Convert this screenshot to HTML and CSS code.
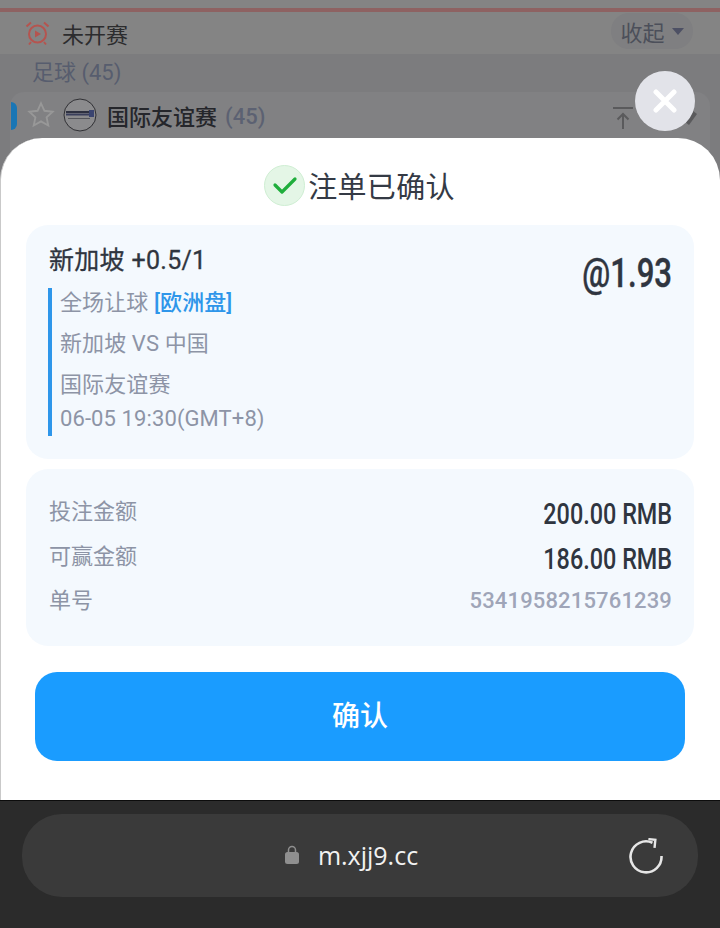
FILE: index.html
```html
<!DOCTYPE html>
<html lang="zh-CN">
<head>
  <meta charset="UTF-8">
  <title>注单已确认</title>
  <link rel="stylesheet" href="styles.css">
</head>
<body>

  <!-- PAGE UNDER THE DIALOG -->
  <div id="page">
    <div class="top-strip"></div>
    <div class="status-row">
      <div class="status-left">
        <svg class="clock-icon" width="26" height="26" viewBox="0 0 26 26" fill="none" stroke="#b5544f" stroke-width="2">
          <circle cx="12.5" cy="14" r="8.5"/>
          <path d="M1.5 6.500 6 2.500M23.500 6.500 19 2.500M6 22l-2 2.500M19 22l2 2.500"/>
          <path d="M10 10.500v7l6-3.500z" fill="#b5544f" stroke="none"/>
        </svg>
        <span>未开赛</span>
      </div>
      <div class="collapse-pill">收起<i class="caret"></i></div>
    </div>
    <div class="sport-row">足球 (45)</div>
    <div class="league-card">
      <i class="league-mark"></i>
      <svg class="star-icon" width="28" height="28" viewBox="0 0 30 30" fill="none" stroke="#989898" stroke-width="2">
        <path d="M15 2.500l3.700 8 8.800 1-6.500 6 1.800 8.700-7.800-4.400-7.800 4.400 1.800-8.700-6.500-6 8.800-1z"/>
      </svg>
      <svg class="league-logo" width="34" height="34" viewBox="0 0 34 34">
        <circle cx="17" cy="17" r="16" fill="#8b8b8d" stroke="#303034" stroke-width="1"/>
        <rect x="3" y="13" width="28" height="2" fill="#2d3040"/>
        <rect x="3" y="15.500" width="24" height="2" fill="#3a3f5c"/>
        <rect x="26" y="12" width="5" height="7" fill="#3a4470"/>
        <rect x="5" y="20" width="22" height="1" fill="#55565c"/>
      </svg>
      <span class="league-name">国际友谊赛</span>
      <span class="league-count">(45)</span>
      <svg class="pin-icon" width="20" height="22" viewBox="0 0 20 22" fill="none" stroke="#5a5a5c" stroke-width="2">
        <path d="M0 1h20M10 22V7M4.500 12.500 10 7l5.500 5.500"/>
      </svg>
      <svg class="edit-icon" width="14" height="14" viewBox="0 0 14 14" fill="#5a5a5c">
        <path d="M10 0l4 3-8 11-4-3z"/>
      </svg>
    </div>
  </div>

  <button class="close-btn" type="button">
    <svg width="24" height="24" viewBox="0 0 24 24" stroke="#fff" stroke-width="5" stroke-linecap="round">
      <path d="M3 3l18 18M21 3L3 21"/>
    </svg>
  </button>

  <!-- CONFIRM DIALOG -->
  <div id="dialog">
    <div class="dialog-title">
      <span class="check-badge">
        <svg width="26" height="20" viewBox="0 0 26 20" fill="none" stroke="#1fae3c" stroke-width="3.200" stroke-linecap="round" stroke-linejoin="round">
          <path d="M3 10l7 7L23 4"/>
        </svg>
      </span>
      <span>注单已确认</span>
    </div>

    <div class="card bet-card">
      <div class="bet-head">
        <div class="bet-pick">新加坡 +0.5/1</div>
        <div class="bet-odds"><span class="narrow">@1.93</span></div>
      </div>
      <div class="bet-info">
        <div class="info-line">全场让球 <strong>[欧洲盘]</strong></div>
        <div class="info-line">新加坡 VS 中国</div>
        <div class="info-line">国际友谊赛</div>
        <div class="info-line info-time">06-05 19:30(GMT+8)</div>
      </div>
    </div>

    <div class="card amount-card">
      <div class="amount-row"><span>投注金额</span><b class="narrow">200.00 RMB</b></div>
      <div class="amount-row"><span>可赢金额</span><b class="narrow">186.00 RMB</b></div>
      <div class="amount-row"><span>单号</span><em>5341958215761239</em></div>
    </div>

    <button class="confirm-btn" type="button">确认</button>
  </div>

  <!-- BROWSER BAR -->
  <div id="browser-bar">
    <div class="url-pill">
      <div class="url-text">
        <svg width="16" height="20" viewBox="0 0 16 20">
          <path d="M4.500 8V5a3.500 3.500 0 0 1 7 0v3" fill="none" stroke="#8f8f8f" stroke-width="1.500"/>
          <rect x="1" y="7" width="14" height="12" rx="2.500" fill="#8f8f8f"/>
        </svg>
        <span>m.xjj9.cc</span>
      </div>
      <svg class="reload-icon" width="36" height="36" viewBox="0 0 36 36" fill="none" stroke="#e6e6e6" stroke-width="2.600">
        <path d="M24.500 4.800A15.500 15.500 0 1 0 33.500 18"/>
        <path d="M20 1.500h7v8" stroke-width="2.400" transform="rotate(6 24 5)"/>
      </svg>
    </div>
  </div>

</body>
</html>
```

FILE: styles.css
```css
* {
  box-sizing: border-box;
}

body {
  position: relative;
  width: 720px;
  height: 928px;
  margin: 0;
  overflow: hidden;
  display: flex;
  flex-direction: column;
  background: #7b7b7b;
  font-family: Roboto, "Noto Sans CJK SC", sans-serif;
  color: #2f3540;
}

#page {
  height: 800px;
  background: #7c7c7e;
}

.top-strip {
  height: 12px;
  background: #848484;
  border-bottom: 4px solid #8e6262;
}

.status-row {
  height: 42px;
  padding: 0 27px 0 25px;
  background: #848484;
  display: flex;
  align-items: center;
  justify-content: space-between;
  font-size: 22px;
  color: #2c2c2e;
}

.status-left {
  display: flex;
  align-items: center;
  gap: 11px;
}

.collapse-pill {
  width: 82px;
  height: 36px;
  margin-top: -4px;
  border-radius: 18px;
  background: #7f7f81;
  display: flex;
  align-items: center;
  justify-content: center;
  gap: 7px;
  color: #4c4f5a;
}

.caret {
  width: 0;
  height: 0;
  border-left: 6px solid transparent;
  border-right: 6px solid transparent;
  border-top: 7px solid #4d5064;
}

.sport-row {
  height: 38px;
  padding: 0 0 7px 32px;
  display: flex;
  align-items: center;
  font-size: 22px;
  color: #575d6e;
}

.league-card {
  position: relative;
  height: 60px;
  margin: 0 10px;
  padding: 0 0 14px 17px;
  background: #818183;
  border-radius: 14px 14px 0 0;
  display: flex;
  align-items: center;
  font-size: 22px;
  font-weight: 500;
  color: #25262b;
}

.league-mark {
  position: absolute;
  left: 1px;
  top: 10px;
  width: 6px;
  height: 28px;
  background: #1a76b5;
  border-radius: 0 6px 6px 0;
}

.league-logo {
  margin: 0 10px 0 8px;
}

.league-count {
  margin: 3px 0 0 8px;
  color: #5c6172;
}

.pin-icon {
  margin: 6px 0 0 auto;
}

.edit-icon {
  margin: 6px 13px 0 50px;
}

.close-btn {
  position: absolute;
  left: 635px;
  top: 71px;
  width: 60px;
  height: 60px;
  padding: 0;
  border: none;
  border-radius: 50%;
  background: #e2e3e9;
  display: flex;
  align-items: center;
  justify-content: center;
}

#dialog {
  position: absolute;
  left: 0;
  top: 138px;
  width: 720px;
  height: 662px;
  padding: 26px 26px 0 25px;
  background: #fff;
  border-radius: 42px 42px 0 0;
  border-left: 1px solid #c9c9c9;
}

.dialog-title {
  height: 42px;
  padding-right: 1px;
  display: flex;
  align-items: center;
  justify-content: center;
  gap: 3px;
  font-size: 29px;
  letter-spacing: 0.3px;
  color: #343a45;
}

.check-badge {
  width: 41px;
  height: 41px;
  border-radius: 50%;
  background: #e4f6e6;
  border: 1px solid #cfeed3;
  display: flex;
  align-items: center;
  justify-content: center;
}

.card {
  background: #f4f9fe;
  border-radius: 22px;
}

.bet-card {
  height: 234px;
  margin-top: 19px;
  padding: 19px 22px 0 23px;
}

.bet-head {
  display: flex;
  justify-content: space-between;
}

.bet-pick {
  font-size: 25px;
  line-height: 34px;
  letter-spacing: 0.3px;
  -webkit-text-stroke: 0.3px #2f3540;
}

.narrow {
  display: inline-block;
  transform: scaleX(0.78);
  transform-origin: right center;
}

.bet-odds {
  font-size: 41px;
  font-weight: 500;
  line-height: 58px;
}

.bet-odds .narrow {
  transform: scaleX(0.76);
  -webkit-text-stroke: 0.4px #2f3540;
}

.bet-info {
  width: 300px;
  height: 148px;
  margin: -14px 0 0 -1px;
  padding-left: 8px;
  border-left: 4px solid #2e96ea;
}

.info-line {
  height: 41px;
  font-size: 22px;
  line-height: 30px;
  letter-spacing: 0.1px;
  color: #8d94a6;
}

.info-line strong {
  font-weight: 500;
  color: #2e96ea;
}

.info-time {
  height: 30px;
  margin-top: -7px;
}

.amount-card {
  height: 177px;
  margin-top: 10px;
  padding: 21px 22px 0 23px;
}

.amount-row {
  height: 44.500px;
  display: flex;
  justify-content: space-between;
  align-items: flex-start;
  font-size: 22px;
  line-height: 43px;
  color: #8d94a6;
}

.amount-row b {
  font-size: 30px;
  font-weight: 500;
  line-height: 48px;
  color: #2f3540;
}

.amount-row em {
  font-style: normal;
  font-weight: 500;
  letter-spacing: 0.15px;
  color: #9fa5b8;
}

.confirm-btn {
  display: block;
  width: 650px;
  height: 89px;
  margin: 26px 0 0 9px;
  padding: 0 0 6px;
  border: none;
  border-radius: 22px;
  background: #1a9cff;
  font-family: inherit;
  font-size: 28px;
  font-weight: 500;
  color: #fff;
}

#browser-bar {
  height: 128px;
  padding: 13px 22px 0;
  background: #2b2b2b;
  border-top: 1px solid #0c0c0c;
}

.url-pill {
  position: relative;
  height: 83px;
  border-radius: 40px;
  background: #3a3a3a;
  display: flex;
  align-items: center;
  justify-content: center;
}

.url-text {
  display: flex;
  align-items: center;
  gap: 18px;
  font-family: "Open Sans", sans-serif;
  font-size: 25px;
  line-height: 30px;
  color: #f2f2f2;
  margin: -2px 18px 0 0;
}

.reload-icon {
  position: absolute;
  right: 34px;
  top: 24px;
}
```
